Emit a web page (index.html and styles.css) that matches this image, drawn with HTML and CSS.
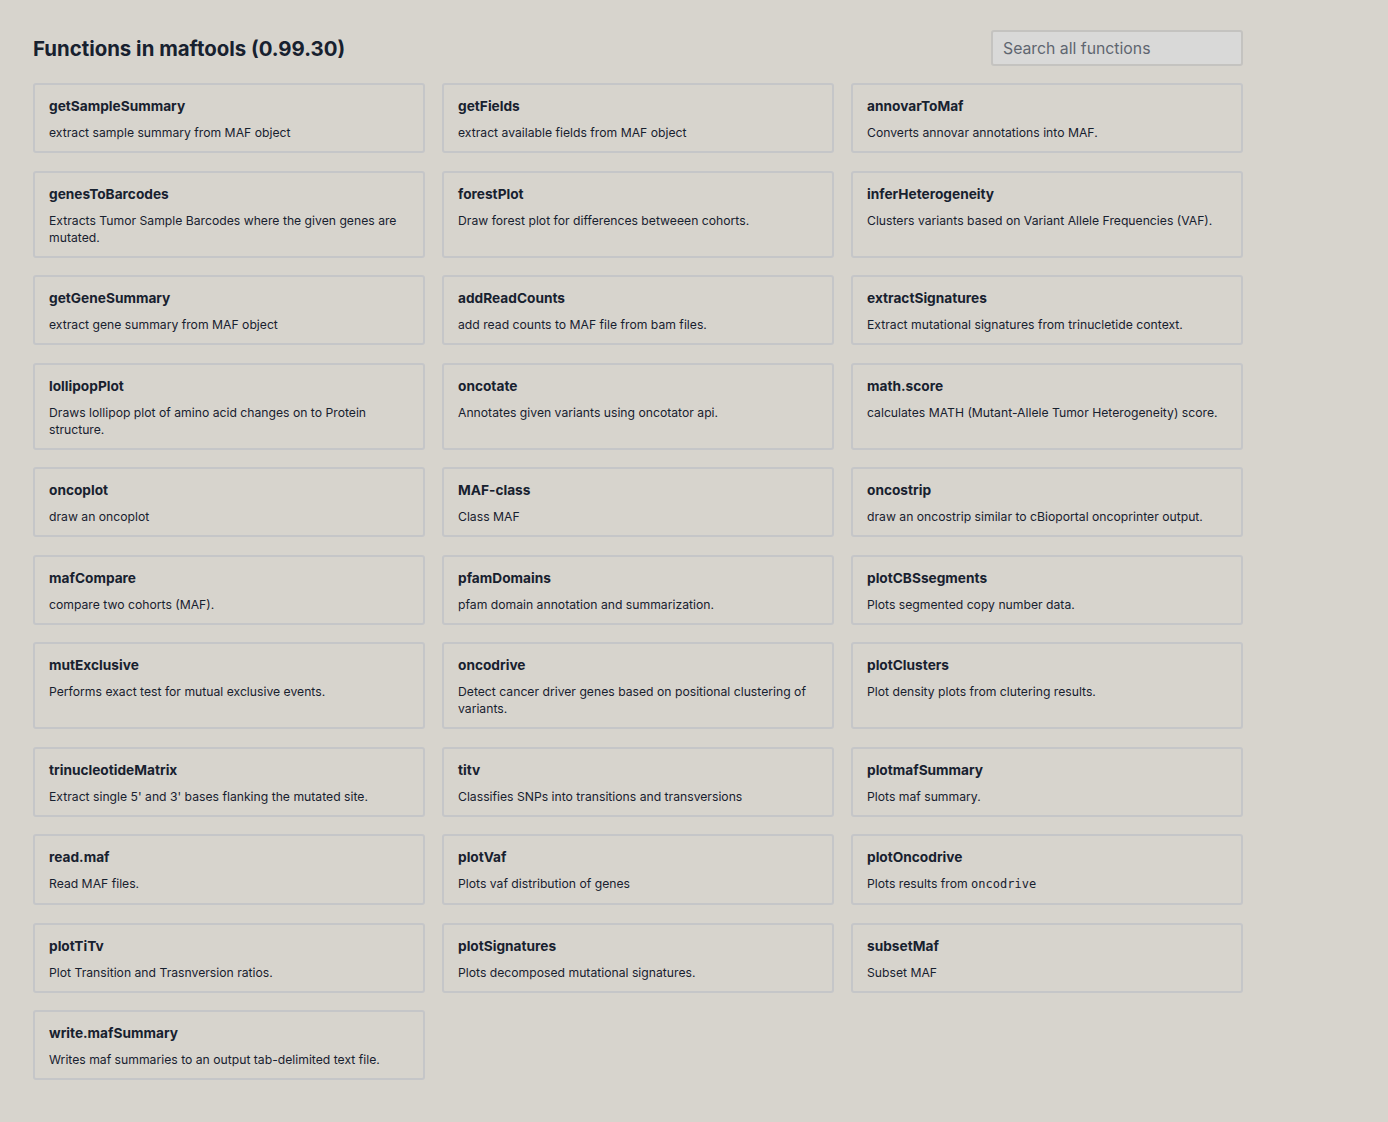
FILE: index.html
```html
<!DOCTYPE html>
<html lang="en">
<head>
<meta charset="utf-8">
<title>Functions in maftools (0.99.30)</title>
<link rel="stylesheet" href="styles.css">
</head>
<body>
<main class="page">
  <header class="page-header">
    <h1 class="page-title">Functions in maftools (0.99.30)</h1>
    <input class="search" type="text" placeholder="Search all functions">
  </header>
  <section class="grid">
    <a class="card"><h2 class="card-title">getSampleSummary</h2><p class="card-desc">extract sample summary from MAF object</p></a>
    <a class="card"><h2 class="card-title">getFields</h2><p class="card-desc">extract available fields from MAF object</p></a>
    <a class="card"><h2 class="card-title">annovarToMaf</h2><p class="card-desc">Converts annovar annotations into MAF.</p></a>
    <a class="card"><h2 class="card-title">genesToBarcodes</h2><p class="card-desc">Extracts Tumor Sample Barcodes where the given genes are mutated.</p></a>
    <a class="card"><h2 class="card-title">forestPlot</h2><p class="card-desc">Draw forest plot for differences betweeen cohorts.</p></a>
    <a class="card"><h2 class="card-title">inferHeterogeneity</h2><p class="card-desc">Clusters variants based on Variant Allele Frequencies (VAF).</p></a>
    <a class="card"><h2 class="card-title">getGeneSummary</h2><p class="card-desc">extract gene summary from MAF object</p></a>
    <a class="card"><h2 class="card-title">addReadCounts</h2><p class="card-desc">add read counts to MAF file from bam files.</p></a>
    <a class="card"><h2 class="card-title">extractSignatures</h2><p class="card-desc">Extract mutational signatures from trinucletide context.</p></a>
    <a class="card"><h2 class="card-title">lollipopPlot</h2><p class="card-desc">Draws lollipop plot of amino acid changes on to Protein structure.</p></a>
    <a class="card"><h2 class="card-title">oncotate</h2><p class="card-desc">Annotates given variants using oncotator api.</p></a>
    <a class="card"><h2 class="card-title">math.score</h2><p class="card-desc">calculates MATH (Mutant-Allele Tumor Heterogeneity) score.</p></a>
    <a class="card"><h2 class="card-title">oncoplot</h2><p class="card-desc">draw an oncoplot</p></a>
    <a class="card"><h2 class="card-title">MAF-class</h2><p class="card-desc">Class MAF</p></a>
    <a class="card"><h2 class="card-title">oncostrip</h2><p class="card-desc">draw an oncostrip similar to cBioportal oncoprinter output.</p></a>
    <a class="card"><h2 class="card-title">mafCompare</h2><p class="card-desc">compare two cohorts (MAF).</p></a>
    <a class="card"><h2 class="card-title">pfamDomains</h2><p class="card-desc">pfam domain annotation and summarization.</p></a>
    <a class="card"><h2 class="card-title">plotCBSsegments</h2><p class="card-desc">Plots segmented copy number data.</p></a>
    <a class="card"><h2 class="card-title">mutExclusive</h2><p class="card-desc">Performs exact test for mutual exclusive events.</p></a>
    <a class="card"><h2 class="card-title">oncodrive</h2><p class="card-desc">Detect cancer driver genes based on positional clustering of variants.</p></a>
    <a class="card"><h2 class="card-title">plotClusters</h2><p class="card-desc">Plot density plots from clutering results.</p></a>
    <a class="card"><h2 class="card-title">trinucleotideMatrix</h2><p class="card-desc">Extract single 5' and 3' bases flanking the mutated site.</p></a>
    <a class="card"><h2 class="card-title">titv</h2><p class="card-desc">Classifies SNPs into transitions and transversions</p></a>
    <a class="card"><h2 class="card-title">plotmafSummary</h2><p class="card-desc">Plots maf summary.</p></a>
    <a class="card"><h2 class="card-title">read.maf</h2><p class="card-desc">Read MAF files.</p></a>
    <a class="card"><h2 class="card-title">plotVaf</h2><p class="card-desc">Plots vaf distribution of genes</p></a>
    <a class="card"><h2 class="card-title">plotOncodrive</h2><p class="card-desc">Plots results from <code class="code">oncodrive</code></p></a>
    <a class="card"><h2 class="card-title">plotTiTv</h2><p class="card-desc">Plot Transition and Trasnversion ratios.</p></a>
    <a class="card"><h2 class="card-title">plotSignatures</h2><p class="card-desc">Plots decomposed mutational signatures.</p></a>
    <a class="card"><h2 class="card-title">subsetMaf</h2><p class="card-desc">Subset MAF</p></a>
    <a class="card"><h2 class="card-title">write.mafSummary</h2><p class="card-desc">Writes maf summaries to an output tab-delimited text file.</p></a>
  </section>
</main>
</body>
</html>
```

FILE: styles.css
```css
html, body {
  margin: 0;
  padding: 0;
  background: #d7d4cd;
}
body {
  font-family: "Inter", "Noto Sans", sans-serif;
  color: #17212f;
}
.page {
  width: 1210px;
  padding: 30px 0 40px 33px;
}
.page-header {
  display: flex;
  justify-content: space-between;
  align-items: center;
  height: 36px;
  margin-bottom: 17px;
}
.page-title {
  margin: 0;
  font-size: 20.4px;
  font-weight: 700;
}
.search {
  box-sizing: border-box;
  width: 252px;
  height: 36px;
  border: 2px solid #c4c3c0;
  border-radius: 3px;
  background: #d9d9d8;
  padding: 0 10px;
  font-family: inherit;
  font-size: 15.8px;
  color: #17212f;
  outline: none;
}
.search::placeholder {
  color: #5f6670;
}
.grid {
  display: grid;
  grid-template-columns: repeat(3, 392px);
  column-gap: 17px;
  row-gap: 17.5px;
}
.card {
  display: block;
  box-sizing: border-box;
  border: 2px solid #c5c6c8;
  border-radius: 3px;
  padding: 11px 14px 10px;
  color: inherit;
  text-decoration: none;
}
.card-title {
  margin: 0 0 8px;
  font-size: 13.7px;
  line-height: 20px;
  font-weight: 700;
}
.card-desc {
  margin: 0;
  font-size: 12.2px;
  line-height: 17px;
}
.code {
  font-family: "DejaVu Sans Mono", monospace;
  font-size: 12px;
}
```
